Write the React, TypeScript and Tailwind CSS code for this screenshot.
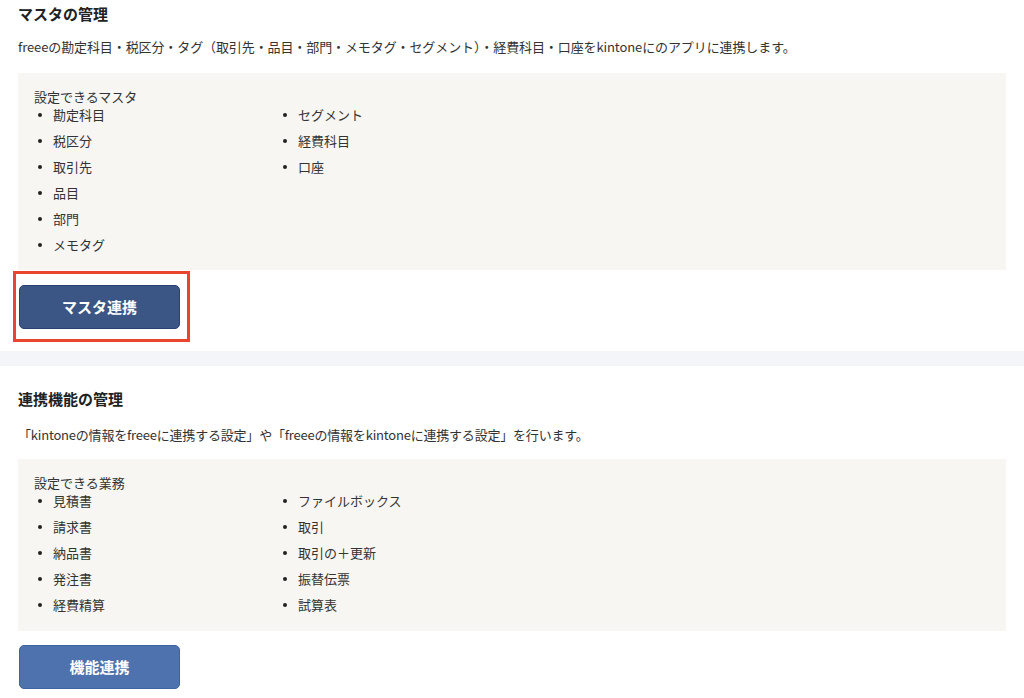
import React from "react";

const font = { fontFamily: '"Noto Sans CJK JP", "Liberation Sans", sans-serif' };

function Item({ text }: { text: string }) {
  return (
    <li className="flex items-center h-[20px] text-[13px] text-[#333333]">
      <span className="w-[19px] flex items-center pl-[4px]">
        <span className="block w-[4px] h-[4px] rounded-full bg-[#222222]" />
      </span>
      <span>{text}</span>
    </li>
  );
}

function Box({ title, col1, col2, pb }: { title: string; col1: string[]; col2: string[]; pb: string }) {
  return (
    <div className={`bg-[#f7f6f2] pt-[16px] px-[16px] ${pb}`}>
      <div className="text-[13px] leading-[16px] text-[#333333]">{title}</div>
      <div className="flex">
        <ul className="w-[245px] flex flex-col gap-[6px]">
          {col1.map((t) => (
            <Item key={t} text={t} />
          ))}
        </ul>
        <ul className="flex flex-col gap-[6px]">
          {col2.map((t) => (
            <Item key={t} text={t} />
          ))}
        </ul>
      </div>
    </div>
  );
}

export default function App() {
  return (
    <div className="w-full min-h-[698px] bg-white text-[#222222]" style={font}>
      <section className="px-[18px] pr-[18px]">
        <h2 className="text-[15px] font-bold leading-[26px] pt-[1px]">マスタの管理</h2>
        <p className="text-[13px] leading-[20px] mt-[10px] text-[#333333] tracking-[-0.1px]">
          freeeの勘定科目・税区分・タグ（取引先・品目・部門・メモタグ・セグメント）・経費科目・口座をkintoneにのアプリに連携します。
        </p>
        <div className="mt-[16px]">
          <Box
            title="設定できるマスタ"
            col1={["勘定科目", "税区分", "取引先", "品目", "部門", "メモタグ"]}
            col2={["セグメント", "経費科目", "口座"]}
            pb="pb-[15px]"
          />
        </div>
        <div className="relative w-[161px] mt-[15px] mb-[22px] ml-[1px]">
          <button className="w-[161px] h-[44px] rounded-[5px] bg-[#3b5684] border border-[#2a4272] text-white font-bold text-[15px]">
            マスタ連携
          </button>
          <div className="absolute left-[-6px] top-[-14px] w-[177px] h-[71px] border-[3px] border-[#e8452c] pointer-events-none" />
        </div>
      </section>
      <div className="h-[15px] bg-[#f4f5f8]" />
      <section className="px-[18px] pt-[20px]">
        <h2 className="text-[15px] font-bold leading-[26px]">連携機能の管理</h2>
        <p className="text-[13px] leading-[20px] mt-[13px] text-[#333333] tracking-[-0.2px]">
          「kintoneの情報をfreeeに連携する設定」や「freeeの情報をkintoneに連携する設定」を行います。
        </p>
        <div className="mt-[14px]">
          <Box
            title="設定できる業務"
            col1={["見積書", "請求書", "納品書", "発注書", "経費精算"]}
            col2={["ファイルボックス", "取引", "取引の＋更新", "振替伝票", "試算表"]}
            pb="pb-[16px]"
          />
        </div>
        <div className="w-[161px] mt-[14px] ml-[1px]">
          <button className="w-[161px] h-[44px] rounded-[5px] bg-[#4e72ad] border border-[#3f63a0] text-white font-bold text-[15px]">
            機能連携
          </button>
        </div>
      </section>
    </div>
  );
}
